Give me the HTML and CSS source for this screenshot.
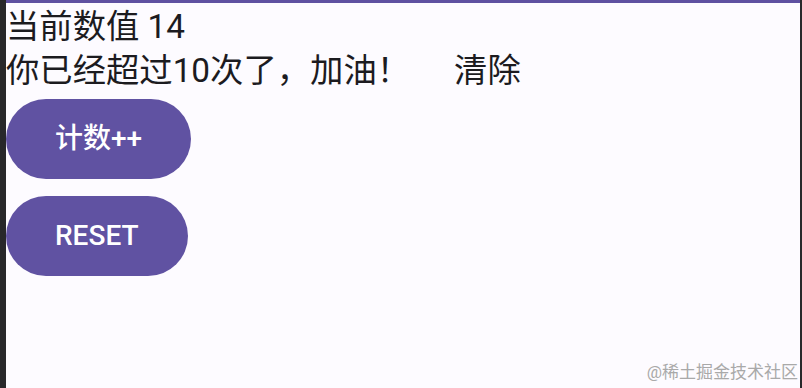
FILE: index.html
```html
<!DOCTYPE html>
<html lang="zh-CN">
<head>
<meta charset="utf-8">
<title>计数</title>
<link rel="stylesheet" href="styles.css">
</head>
<body>
<div class="frame">
  <div class="edge-left"></div>
  <main class="screen">
    <div class="value">当前数值 14</div>
    <div class="tip-row">
      <span class="tip">你已经超过10次了，加油！</span>
      <span class="clear">清除</span>
    </div>
    <div class="buttons">
      <button class="pill">计数++</button>
      <button class="pill">RESET</button>
    </div>
    <div class="watermark">@稀土掘金技术社区</div>
  </main>
  <div class="edge-right"></div>
</div>
</body>
</html>
```

FILE: styles.css
```css
html, body {
  margin: 0;
  padding: 0;
}
body {
  width: 802px;
  height: 388px;
  overflow: hidden;
  font-family: Roboto, "Noto Sans CJK SC", sans-serif;
  color: #1c1b1f;
}
.frame {
  display: flex;
  width: 802px;
  height: 388px;
}
.edge-left {
  width: 6px;
  background: #28282a;
}
.edge-right {
  width: 2px;
  background: #28282a;
}
.screen {
  position: relative;
  flex: 1;
  background: #fdfbff;
  border-top: 3px solid #5f51a1;
  display: flex;
  flex-direction: column;
  align-items: flex-start;
}
.value {
  font-size: 33.33px;
  line-height: 47px;
}
.tip-row {
  display: flex;
  align-items: center;
  height: 41px;
  margin-bottom: 8px;
  font-size: 33.33px;
  line-height: 41px;
}
.clear {
  margin-left: 28px;
  padding: 0 16px;
}
.buttons {
  display: flex;
  flex-direction: column;
  align-items: flex-start;
  gap: 17px;
}
.pill {
  height: 80px;
  padding: 0 49px;
  border: none;
  border-radius: 40px;
  background: #6052a2;
  color: #ffffff;
  font-family: Roboto, "Noto Sans CJK SC", sans-serif;
  font-size: 28px;
  font-weight: 500;
  line-height: 34px;
  cursor: pointer;
}
.watermark {
  position: absolute;
  right: 2px;
  bottom: 6px;
  font-size: 17px;
  line-height: 20px;
  color: #a9a9a9;
}
```
